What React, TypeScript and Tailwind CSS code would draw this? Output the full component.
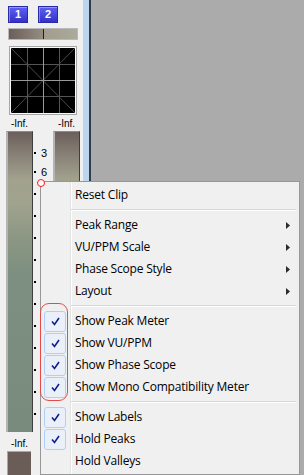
import React from "react";

const sans = "font-['Open_Sans',sans-serif]";

const NumButton = ({ label }: { label: string }) => (
  <div className="flex h-[17px] w-[20px] items-center justify-center border border-[#2a2aa6] bg-gradient-to-b from-[#6060f4] to-[#3232c6] text-[11px] font-bold leading-none text-white shadow-[inset_1px_1px_0_rgba(255,255,255,0.35)] font-['Liberation_Sans',sans-serif]">
    {label}
  </div>
);

const PhaseScope = () => (
  <div className="ml-[9px] mt-[6px] h-[69px] w-[68px] border border-[#a6a6a6] bg-[#fafafa] p-px">
    <svg width="64" height="65" viewBox="0 0 64 65" className="block bg-black">
      <line x1="0" y1="0" x2="64" y2="65" stroke="#4a4a4a" strokeWidth="1" />
      <line x1="64" y1="0" x2="0" y2="65" stroke="#4a4a4a" strokeWidth="1" />
      <line x1="16.5" y1="0" x2="16.5" y2="65" stroke="#555" />
      <line x1="48.5" y1="0" x2="48.5" y2="65" stroke="#555" />
      <line x1="0" y1="16.5" x2="64" y2="16.5" stroke="#555" />
      <line x1="0" y1="48.5" x2="64" y2="48.5" stroke="#555" />
      <line x1="32.5" y1="0" x2="32.5" y2="65" stroke="#9a9a9a" />
      <line x1="0" y1="32.5" x2="64" y2="32.5" stroke="#9a9a9a" />
    </svg>
  </div>
);

const Meter = () => (
  <div className="h-full w-[27px] border-l-2 border-t border-r border-l-[#b4b4b4] border-t-[#8c8c8c] border-r-[#3e3e3e] bg-[linear-gradient(to_bottom,#6a5f5a_0%,#867e75_7%,#a2a28e_16%,#a0a38e_24%,#8b9683_36%,#7c8f80_48%,#788b7c_100%)]" />
);

const TickRow = ({ n }: { n: number }) => (
  <div className="flex h-[12px] items-center">
    <div className="ml-[1px] h-[2px] w-[2px] bg-black" />
    <span className="ml-[5px] text-[11px] leading-none text-black font-['Liberation_Sans',sans-serif]">
      {n}
    </span>
  </div>
);

const Scale = () => (
  <div className="flex h-full w-[20px] flex-col pt-[16px]">
    <TickRow n={3} />
    <div className="mt-[7px]">
      <TickRow n={6} />
    </div>
    <div className="mt-[10px] flex flex-col gap-[10px]">
      {[9, 12, 15, 18, 21, 24, 27, 30, 33, 36, 39].map((n) => (
        <TickRow key={n} n={n} />
      ))}
    </div>
  </div>
);

const Check = () => (
  <div className="flex h-[21px] w-[22px] items-center justify-center rounded-[3px] border border-[#aecff7] bg-[#eaf0f9]">
    <svg width="9" height="9" viewBox="0 0 9 9">
      <polyline points="1,4.5 3.5,7.5 8,1" fill="none" stroke="#141c8c" strokeWidth="1.6" />
    </svg>
  </div>
);

const Arrow = () => (
  <svg width="4" height="7" viewBox="0 0 4 7" className="mr-[7px]">
    <polygon points="0,0 4,3.5 0,7" fill="#2b2b2b" />
  </svg>
);

type Item = { label: string; check?: boolean; sub?: boolean } | "sep";

const items: Item[] = [
  { label: "Reset Clip" },
  "sep",
  { label: "Peak Range", sub: true },
  { label: "VU/PPM Scale", sub: true },
  { label: "Phase Scope Style", sub: true },
  { label: "Layout", sub: true },
  "sep",
  { label: "Show Peak Meter", check: true },
  { label: "Show VU/PPM", check: true },
  { label: "Show Phase Scope", check: true },
  { label: "Show Mono Compatibility Meter", check: true },
  "sep",
  { label: "Show Labels", check: true },
  { label: "Hold Peaks", check: true },
  { label: "Hold Valleys" },
];

const ContextMenu = () => (
  <div
    className={`absolute left-[40px] top-[181px] h-[294px] w-[260px] border border-[#979797] bg-[#f0f0f0] bg-[linear-gradient(to_right,#f0f0f0_29px,#e2e3e3_29px,#e2e3e3_30px,#ffffff_30px,#ffffff_31px,#f0f0f0_31px)] p-[2px] text-[12px] text-black ${sans}`}
  >
    {items.map((item, i) =>
      item === "sep" ? (
        <div key={i} className="h-[8px] pl-[28px] pr-[1px] pt-[3px]">
          <div className="h-px bg-[#d7d7d7]" />
          <div className="h-px bg-white" />
        </div>
      ) : (
        <div key={i} className="flex h-[22px] items-center">
          <div className="flex w-[27px] pl-px">{item.check && <Check />}</div>
          <span className="ml-[5px] flex-1 tracking-[-0.2px]">{item.label}</span>
          {item.sub && <Arrow />}
        </div>
      )
    )}
  </div>
);

export default function App() {
  return (
    <div className="relative flex h-[475px] w-[304px] overflow-hidden bg-[#ababab]">
      <div className="flex h-full w-[83px] flex-col bg-[#f0f0f0]">
        <div className="flex gap-[10px] pl-[8px] pt-[6px]">
          <NumButton label="1" />
          <NumButton label="2" />
        </div>
        <div className="ml-[8px] mt-[5px] flex h-[12px] w-[70px] border border-[#b9b9b9]">
          <div className="h-full w-[34px] bg-gradient-to-r from-[#6b5f59] to-[#958d82]" />
          <div className="h-full w-px bg-[#1e1e1e]" />
          <div className="h-full flex-1 bg-gradient-to-r from-[#a39c8d] to-[#a9ab9b]" />
        </div>
        <PhaseScope />
        <div className="flex h-[16px] items-center pl-[6px] pt-[2px] text-[10px] leading-none text-black font-['Liberation_Sans',sans-serif]">
          <span className="w-[27px] text-center">-Inf.</span>
          <span className="w-[20px]" />
          <span className="w-[27px] text-center">-Inf.</span>
        </div>
        <div className="flex h-[301px] pl-[6px]">
          <Meter />
          <Scale />
          <Meter />
        </div>
        <div className="flex h-[19px] items-center pl-[6px] pt-[4px] text-[10px] leading-none text-black font-['Liberation_Sans',sans-serif]">
          <span className="w-[27px] text-center">-Inf.</span>
        </div>
        <div className="ml-[7px] h-[24px] w-[24px] border-l border-t border-[#a8a8a8] bg-[#6a5d58]" />
      </div>
      <div className="h-full w-[6px] bg-[#bdd6ef]" />
      <div className="h-full w-[2px] bg-[#333d48]" />
      <div className="h-full flex-1" />

      <ContextMenu />

      <div className="absolute left-[40px] top-[303px] h-[98px] w-[28px] rounded-[9px] border-[1.5px] border-[#e84a4a]" />
      <div className="absolute left-[37px] top-[179px] h-[8px] w-[8px] rounded-full border-[1.5px] border-[#ff1414] bg-white" />
    </div>
  );
}
